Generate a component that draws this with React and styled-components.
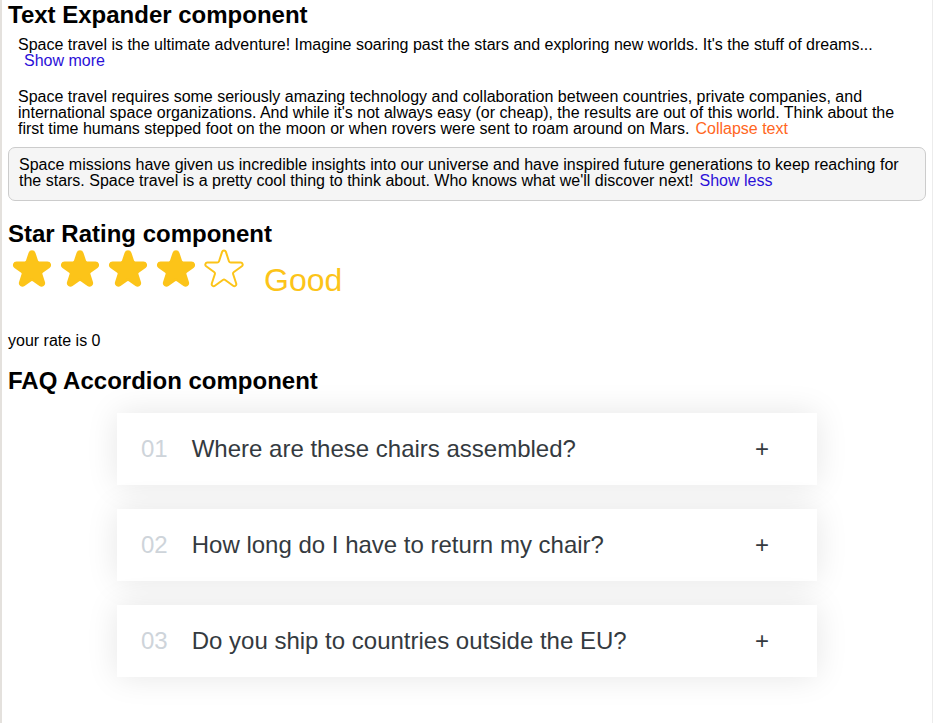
import React, { useState } from "react";
import styled, { createGlobalStyle } from "styled-components";

const GlobalStyle = createGlobalStyle`
  * {
    box-sizing: border-box;
  }
  body {
    margin: 0;
    font-family: "Liberation Sans", Arial, sans-serif;
    color: #000;
    background: #fff;
  }
`;

const Page = styled.div`
  min-height: 100vh;
  padding: 3px 6px 0 6px;
  border-left: 2px solid #e4e1dd;
  border-right: 1px solid #ececec;
  width: 933px;
`;

const Heading = styled.h2`
  margin: 0;
  font-size: 24px;
  line-height: 1;
  font-weight: bold;
`;

const Section = styled.section`
  margin-top: ${(p) => p.$top || 0}px;
`;

const Expander = styled.div`
  font-size: 16px;
  line-height: 16px;
  margin: ${(p) => (p.$boxed ? "0" : "0 10px")};
  padding: ${(p) => (p.$boxed ? "9px 10px 11px" : "0")};
  border: ${(p) => (p.$boxed ? "1px solid #ccc" : "none")};
  border-radius: 7px;
  background: ${(p) => (p.$boxed ? "#f5f5f5" : "transparent")};
`;

const ExpanderList = styled.div`
  display: flex;
  flex-direction: column;
  margin-top: 10px;
  gap: 20px;

  & > :last-child {
    margin-top: -10px;
  }
`;

const ToggleButton = styled.button`
  background: none;
  border: none;
  font: inherit;
  line-height: inherit;
  padding: 0;
  margin-left: 6px;
  cursor: pointer;
  color: ${(p) => p.$color};
`;

function TextExpander({
  children,
  collapsedNumWords = 10,
  expandButtonText = "Show more",
  collapseButtonText = "Show less",
  buttonColor = "#2b10d8",
  expanded = false,
  boxed = false,
}) {
  const [isExpanded, setIsExpanded] = useState(expanded);
  const shown = isExpanded
    ? children
    : children.split(" ").slice(0, collapsedNumWords).join(" ") + "...";
  return (
    <Expander $boxed={boxed}>
      {shown}
      <ToggleButton $color={buttonColor} onClick={() => setIsExpanded((e) => !e)}>
        {isExpanded ? collapseButtonText : expandButtonText}
      </ToggleButton>
    </Expander>
  );
}

const RatingRow = styled.div`
  display: flex;
  align-items: flex-start;
  gap: 16px;
`;

const Stars = styled.div`
  display: flex;
`;

const StarBox = styled.span`
  display: block;
  width: 48px;
  height: 48px;
  cursor: pointer;

  svg {
    display: block;
    width: 100%;
    height: 100%;
  }
`;

const RatingLabel = styled.p`
  margin: 18px 0 0;
  line-height: 1;
  font-size: 32px;
  color: #fcc419;
`;

const RateText = styled.p`
  margin: 37px 0 0;
  font-size: 16px;
  line-height: 1;
`;

function Star({ full, color }) {
  return (
    <StarBox role="button">
      {full ? (
        <svg xmlns="http://www.w3.org/2000/svg" viewBox="0 0 20 20" fill={color} stroke={color}>
          <path d="M9.049 2.927c.3-.921 1.603-.921 1.902 0l1.07 3.292a1 1 0 00.95.69h3.462c.969 0 1.371 1.24.588 1.81l-2.8 2.034a1 1 0 00-.364 1.118l1.07 3.292c.3.921-.755 1.688-1.54 1.118l-2.8-2.034a1 1 0 00-1.175 0l-2.8 2.034c-.784.57-1.838-.197-1.539-1.118l1.07-3.292a1 1 0 00-.364-1.118L2.98 8.72c-.783-.57-.38-1.81.588-1.81h3.461a1 1 0 00.951-.69l1.07-3.292z" />
        </svg>
      ) : (
        <svg xmlns="http://www.w3.org/2000/svg" fill="none" viewBox="0 0 24 24" stroke={color}>
          <path
            strokeLinecap="round"
            strokeLinejoin="round"
            strokeWidth="1"
            d="M11.049 2.927c.3-.921 1.603-.921 1.902 0l1.519 4.674a1 1 0 00.95.69h4.915c.969 0 1.371 1.24.588 1.81l-3.976 2.888a1 1 0 00-.363 1.118l1.518 4.674c.3.922-.755 1.688-1.538 1.118l-3.976-2.888a1 1 0 00-1.176 0l-3.976 2.888c-.783.57-1.838-.197-1.538-1.118l1.518-4.674a1 1 0 00-.363-1.118l-3.976-2.888c-.784-.57-.38-1.81.588-1.81h4.914a1 1 0 00.951-.69l1.519-4.674z"
          />
        </svg>
      )}
    </StarBox>
  );
}

const messages = ["Terrible", "Bad", "Okay", "Good", "Amazing"];

function StarRating({ maxRating = 5, defaultRating = 4, color = "#fcc419" }) {
  const [rating] = useState(defaultRating);
  return (
    <RatingRow>
      <Stars>
        {Array.from({ length: maxRating }, (_, i) => (
          <Star key={i} full={i < rating} color={color} />
        ))}
      </Stars>
      <RatingLabel>{messages[rating - 1]}</RatingLabel>
    </RatingRow>
  );
}

const AccordionList = styled.div`
  width: 700px;
  margin: 20px auto 40px;
  display: flex;
  flex-direction: column;
  gap: 24px;
`;

const Item = styled.div`
  box-shadow: 0 0 32px rgba(0, 0, 0, 0.1);
  padding: 20px 48px 20px 24px;
  border-top: 4px solid #fff;
  border-bottom: 4px solid #fff;
  background: #fff;
  display: grid;
  grid-template-columns: auto 1fr auto;
  column-gap: 24px;
  align-items: center;
  cursor: pointer;
  font-size: 24px;
  line-height: 1;
  color: #343a40;
`;

const Number = styled.p`
  margin: 0;
  color: #ced4da;
`;

const Title = styled.p`
  margin: 0;
`;

const Icon = styled.p`
  margin: 0;
`;

const faqs = [
  "Where are these chairs assembled?",
  "How long do I have to return my chair?",
  "Do you ship to countries outside the EU?",
];

export default function App() {
  return (
    <>
      <GlobalStyle />
      <Page>
        <Section>
          <Heading>Text Expander component</Heading>
          <ExpanderList>
            <TextExpander collapsedNumWords={20}>
              Space travel is the ultimate adventure! Imagine soaring past the stars and exploring new worlds. It's the stuff of dreams and science fiction, but believe it or not, space travel is a real thing.
            </TextExpander>
            <TextExpander expanded collapseButtonText="Collapse text" buttonColor="#ff6622">
              Space travel requires some seriously amazing technology and collaboration between countries, private companies, and international space organizations. And while it's not always easy (or cheap), the results are out of this world. Think about the first time humans stepped foot on the moon or when rovers were sent to roam around on Mars.
            </TextExpander>
            <TextExpander expanded boxed>
              Space missions have given us incredible insights into our universe and have inspired future generations to keep reaching for the stars. Space travel is a pretty cool thing to think about. Who knows what we'll discover next!
            </TextExpander>
          </ExpanderList>
        </Section>
        <Section $top={21}>
          <Heading>Star Rating component</Heading>
          <StarRating />
          <RateText>your rate is 0</RateText>
        </Section>
        <Section $top={20}>
          <Heading>FAQ Accordion component</Heading>
          <AccordionList>
            {faqs.map((q, i) => (
              <Item key={q}>
                <Number>{String(i + 1).padStart(2, "0")}</Number>
                <Title>{q}</Title>
                <Icon>+</Icon>
              </Item>
            ))}
          </AccordionList>
        </Section>
      </Page>
    </>
  );
}
